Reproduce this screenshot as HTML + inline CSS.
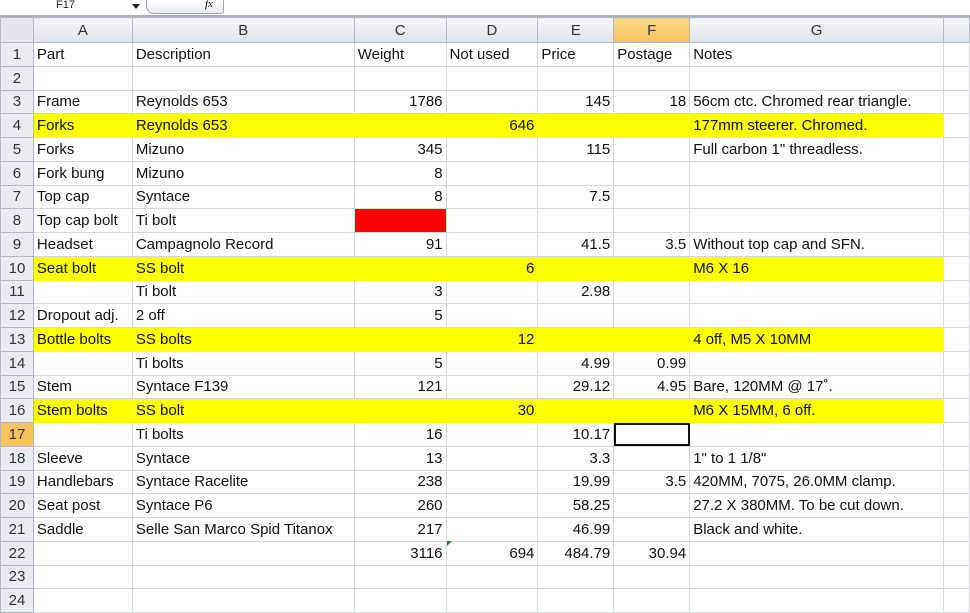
<!DOCTYPE html><html><head><style>
body{margin:0;width:970px;height:600px;overflow:hidden;background:#fff;font-family:"Liberation Sans",sans-serif;position:relative}
.fb{position:absolute;left:0;top:0;width:970px;height:15px;background:#fff;border-bottom:2px solid #a8adb5}
table{position:absolute;left:0;top:17px;border-collapse:collapse;table-layout:fixed}
td{border:1px solid #d4d8dd;height:22.75px;padding:0 3px;font-size:15px;white-space:nowrap;overflow:hidden;color:#111}
tr.h td{height:24px;background:linear-gradient(#f4f6f9,#dfe4ea);text-align:center;color:#333;border-color:#b1b9c4}
td.r{background:#e9edf2;text-align:center;color:#333;border-color:#b1b9c4;padding:0;font-size:15px}
.n{text-align:right}
tr.y td:not(.r){background:#ffff00;border-color:#ffff00}
</style></head><body>
<div class="fb">
<div style="position:absolute;left:56px;top:-1px;font-size:11px;color:#222">F17</div>
<div style="position:absolute;left:132px;top:4px;width:0;height:0;border-left:4px solid transparent;border-right:4px solid transparent;border-top:5px solid #222"></div>
<div style="position:absolute;left:146px;top:0;width:76px;height:13px;border:1px solid #9aa3ae;border-top:none;border-radius:0 0 3px 8px;background:linear-gradient(#fff,#e6eaef)"></div>
<div style="position:absolute;left:205px;top:-2px;font-size:11px;font-style:italic;font-family:'Liberation Serif',serif">fx</div>
</div>
<table>
<colgroup><col style="width:33px"><col style="width:99px"><col style="width:222px"><col style="width:92px"><col style="width:92px"><col style="width:76px"><col style="width:76px"><col style="width:254px"><col style="width:26px"></colgroup>
<tr class="h"><td style="background:#e4e8ee"></td><td>A</td><td>B</td><td>C</td><td>D</td><td>E</td><td style="background:linear-gradient(#fbd98a,#f6c35f)">F</td><td>G</td><td></td></tr>
<tr><td class="r">1</td><td>Part</td><td>Description</td><td>Weight</td><td>Not used</td><td>Price</td><td>Postage</td><td>Notes</td><td></td></tr>
<tr><td class="r">2</td><td></td><td></td><td></td><td></td><td></td><td></td><td></td><td></td></tr>
<tr><td class="r">3</td><td>Frame</td><td>Reynolds 653</td><td class="n">1786</td><td></td><td class="n">145</td><td class="n">18</td><td>56cm ctc. Chromed rear triangle.</td><td></td></tr>
<tr class="y"><td class="r">4</td><td>Forks</td><td>Reynolds 653</td><td></td><td class="n">646</td><td></td><td></td><td>177mm steerer. Chromed.</td><td style="background:#fff;border-color:#d4d8dd"></td></tr>
<tr><td class="r">5</td><td>Forks</td><td>Mizuno</td><td class="n">345</td><td></td><td class="n">115</td><td></td><td>Full carbon 1" threadless.</td><td></td></tr>
<tr><td class="r">6</td><td>Fork bung</td><td>Mizuno</td><td class="n">8</td><td></td><td></td><td></td><td></td><td></td></tr>
<tr><td class="r">7</td><td>Top cap</td><td>Syntace</td><td class="n">8</td><td></td><td class="n">7.5</td><td></td><td></td><td></td></tr>
<tr><td class="r">8</td><td>Top cap bolt</td><td>Ti bolt</td><td style="background:#ff0000"></td><td></td><td></td><td></td><td></td><td></td></tr>
<tr><td class="r">9</td><td>Headset</td><td>Campagnolo Record</td><td class="n">91</td><td></td><td class="n">41.5</td><td class="n">3.5</td><td>Without top cap and SFN.</td><td></td></tr>
<tr class="y"><td class="r">10</td><td>Seat bolt</td><td>SS bolt</td><td></td><td class="n">6</td><td></td><td></td><td>M6 X 16</td><td style="background:#fff;border-color:#d4d8dd"></td></tr>
<tr><td class="r">11</td><td></td><td>Ti bolt</td><td class="n">3</td><td></td><td class="n">2.98</td><td></td><td></td><td></td></tr>
<tr><td class="r">12</td><td>Dropout adj.</td><td>2 off</td><td class="n">5</td><td></td><td></td><td></td><td></td><td></td></tr>
<tr class="y"><td class="r">13</td><td>Bottle bolts</td><td>SS bolts</td><td></td><td class="n">12</td><td></td><td></td><td>4 off, M5 X 10MM</td><td style="background:#fff;border-color:#d4d8dd"></td></tr>
<tr><td class="r">14</td><td></td><td>Ti bolts</td><td class="n">5</td><td></td><td class="n">4.99</td><td class="n">0.99</td><td></td><td></td></tr>
<tr><td class="r">15</td><td>Stem</td><td>Syntace F139</td><td class="n">121</td><td></td><td class="n">29.12</td><td class="n">4.95</td><td>Bare, 120MM @ 17˚.</td><td></td></tr>
<tr class="y"><td class="r">16</td><td>Stem bolts</td><td>SS bolt</td><td></td><td class="n">30</td><td></td><td></td><td>M6 X 15MM, 6 off.</td><td style="background:#fff;border-color:#d4d8dd"></td></tr>
<tr><td class="r" style="background:#f6c35f">17</td><td></td><td>Ti bolts</td><td class="n">16</td><td></td><td class="n">10.17</td><td style="outline:2px solid #111;outline-offset:-2px"></td><td></td><td></td></tr>
<tr><td class="r">18</td><td>Sleeve</td><td>Syntace</td><td class="n">13</td><td></td><td class="n">3.3</td><td></td><td>1" to 1 1/8"</td><td></td></tr>
<tr><td class="r">19</td><td>Handlebars</td><td>Syntace Racelite</td><td class="n">238</td><td></td><td class="n">19.99</td><td class="n">3.5</td><td>420MM, 7075, 26.0MM clamp.</td><td></td></tr>
<tr><td class="r">20</td><td>Seat post</td><td>Syntace P6</td><td class="n">260</td><td></td><td class="n">58.25</td><td></td><td>27.2 X 380MM. To be cut down.</td><td></td></tr>
<tr><td class="r">21</td><td>Saddle</td><td>Selle San Marco Spid Titanox</td><td class="n">217</td><td></td><td class="n">46.99</td><td></td><td>Black and white.</td><td></td></tr>
<tr><td class="r">22</td><td></td><td></td><td class="n">3116</td><td class="n">694</td><td class="n">484.79</td><td class="n">30.94</td><td></td><td></td></tr>
<tr><td class="r">23</td><td></td><td></td><td></td><td></td><td></td><td></td><td></td><td></td></tr>
<tr><td class="r">24</td><td></td><td></td><td></td><td></td><td></td><td></td><td></td><td></td></tr>
</table>
<div style="position:absolute;left:447px;top:541px;width:0;height:0;border-top:5px solid #1e7b34;border-right:5px solid transparent"></div>
</body></html>
